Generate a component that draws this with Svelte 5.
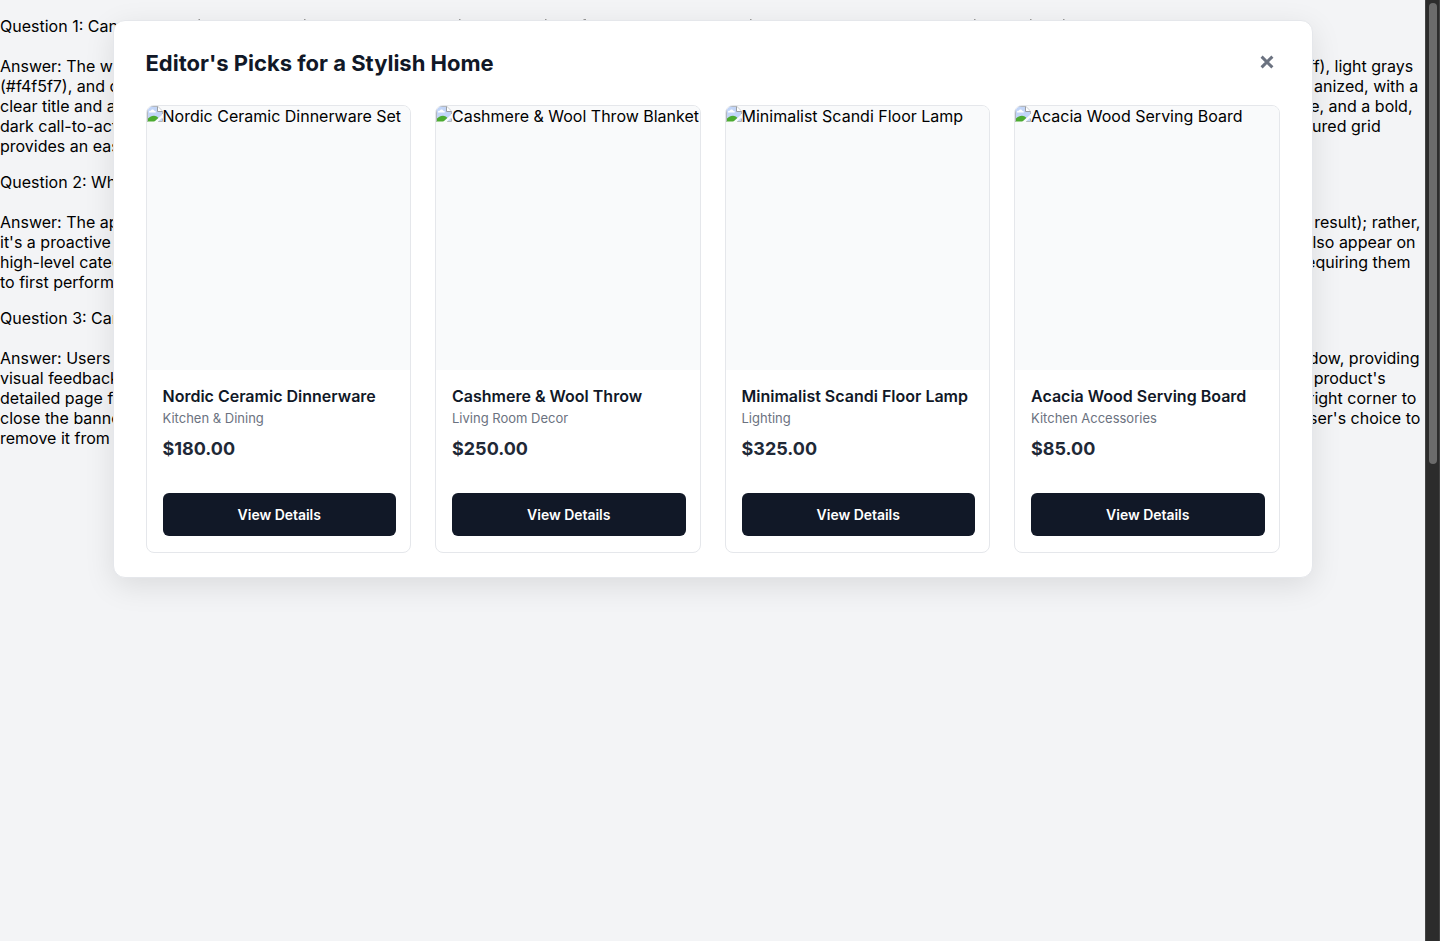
<script>
  const rows = [
    { left: 'Question 1: Can' },
    { left: '' },
    { left: 'Answer: The w', right: 'ff), light grays', end: 1413.3 },
    { left: '(#f4f5f7), and c', right: 'anized, with a', end: 1418.3 },
    { left: 'clear title and a', right: 'e, and a bold,', end: 1412.5 },
    { left: 'dark call-to-act', right: 'ured grid', end: 1380.7 },
    { left: 'provides an eas', last: true },
    { left: 'Question 2: Wh' },
    { left: '' },
    { left: 'Answer: The ap', right: 'result); rather,', end: 1420.3 },
    { left: "it's a proactive", right: 'lso appear on', end: 1415.5 },
    { left: 'high-level categ', right: 'equiring them', end: 1410.5 },
    { left: 'to first perform', last: true },
    { left: 'Question 3: Can' },
    { left: '' },
    { left: 'Answer: Users', right: 'dow, providing', end: 1419.5 },
    { left: 'visual feedback', right: "product's", end: 1385.7 },
    { left: 'detailed page f', right: 'right corner to', end: 1416.3 },
    { left: 'close the banne', right: "ser's choice to", end: 1420.3 },
    { left: 'remove it from' }
  ];

  const products = [
    { alt: 'Nordic Ceramic Dinnerware Set', name: 'Nordic Ceramic Dinnerware', category: 'Kitchen & Dining', price: '$180.00' },
    { alt: 'Cashmere & Wool Throw Blanket', name: 'Cashmere & Wool Throw', category: 'Living Room Decor', price: '$250.00' },
    { alt: 'Minimalist Scandi Floor Lamp', name: 'Minimalist Scandi Floor Lamp', category: 'Lighting', price: '$325.00' },
    { alt: 'Acacia Wood Serving Board', name: 'Acacia Wood Serving Board', category: 'Kitchen Accessories', price: '$85.00' }
  ];

  const tips = [198.5, 304, 459, 545, 583.5, 584.5, 750, 974, 1030, 1063];
</script>

<div class="page">
  <main class="content">
    <div class="copy">
      {#each rows as row}
        <div class="line" class:last={row.last} style:width={row.end ? `${row.end}px` : null}>
          <span>{row.left}</span>
          {#if row.right}<span>{row.right}</span>{/if}
        </div>
      {/each}
      <svg class="tips" width="1425" height="2" aria-hidden="true">
        {#each tips as x}<rect {x} y="0" width="1.5" height="1" />{/each}
      </svg>
    </div>

    <section class="banner">
      <header>
        <h2>Editor's Picks for a Stylish Home</h2>
        <button class="close" aria-label="Close">
          <svg width="14" height="14" viewBox="0 0 14 14"><path d="M1.6 1.6 12.4 12.4M12.4 1.6 1.6 12.4" /></svg>
        </button>
      </header>
      <div class="grid">
        {#each products as product}
          <article>
            <div class="picture">
              <svg width="16" height="16" viewBox="0 0 16 16">
                <path d="M0 0h10.5v5H15v10H0z" fill="#c2d5f7" />
                <path d="M2 6.5c-.3-1.400.8-2 1.800-1.700C4.500 3 6.700 3.200 7.200 4.700c1.200-.1 1.800.7 1.600 1.800z" fill="#fff" />
                <path d="M0 15.5v-2C2 11 4.500 9.700 7 9.700c1.500 0 3 .8 4.500 2.300L8 15.500z" fill="#4cab30" />
                <path d="M.5 15.500V.500h10.300L15.500 5.200V8M15.500 12.500v3H11" fill="none" stroke="#b4b8bd" />
                <path d="M10.500 .500v5h5" fill="#fff" stroke="#999da2" />
                <path d="M7 16 16 8v3L10.500 16z" fill="#f9fafb" />
              </svg><span>{product.alt}</span>
            </div>
            <div class="info">
              <h3>{product.name}</h3>
              <p class="category">{product.category}</p>
              <p class="price">{product.price}</p>
              <button class="details">View Details</button>
            </div>
          </article>
        {/each}
      </div>
    </section>
  </main>
  <div class="scrollbar"><div class="thumb"></div></div>
</div>

<style>
  :global(body) { margin: 0; overflow: hidden; }
  .page {
    display: flex;
    height: 941px;
    background: #f3f4f6;
    font-family: Inter, sans-serif;
    font-size: 16px;
    line-height: 20px;
    color: #000;
  }
  .content { position: relative; width: 1425px; flex: none; overflow: hidden; }
  .copy { padding-top: 16px; position: relative; }
  .line { display: flex; justify-content: space-between; height: 20px; white-space: pre; }
  .last { margin-bottom: 16px; }
  .tips { position: absolute; left: 0; top: 19px; fill: #999; }
  .banner {
    position: absolute;
    top: 20px;
    left: 112.5px;
    width: 1200px;
    height: 558px;
    box-sizing: border-box;
    padding: 24px 32px;
    background: #fff;
    border: 1px solid #e5e7eb;
    border-radius: 12px;
    box-shadow: 0 8px 30px rgba(0, 0, 0, 0.1);
  }
  header { display: flex; justify-content: space-between; align-items: center; height: 36px; margin-bottom: 24px; }
  h2 { margin: 0; font-size: 22px; line-height: 28px; font-weight: 700; color: #111827; }
  button { font-family: inherit; border: 0; margin: 0; }
  .close { display: flex; padding: 0; margin: 0 5.5px 3px 0; background: none; }
  .close path { stroke: #6b7280; stroke-width: 3; }
  .grid { display: grid; grid-template-columns: repeat(4, 1fr); gap: 24px; }
  article {
    height: 448px;
    box-sizing: border-box;
    border: 1px solid #e5e7eb;
    border-radius: 8px;
    overflow: hidden;
    display: flex;
    flex-direction: column;
  }
  .picture { height: 264px; flex: none; display: flex; align-items: flex-start; background: #f9fafb; white-space: nowrap; }
  .picture svg { flex: none; }
  .picture span { line-height: 20px; }
  .info { flex: 1; padding: 16px 14px 16px 16px; display: flex; flex-direction: column; }
  h3 { margin: 0; font-size: 16px; font-weight: 600; line-height: 21px; color: #111827; white-space: nowrap; }
  .category { margin: 3px 0 0; font-size: 13px; line-height: 16px; color: #6b7280; }
  .price { margin: 12px 0 0; font-size: 18px; line-height: 22px; font-weight: 700; color: #1f2937; }
  .details { margin-top: auto; height: 43px; border-radius: 6px; background: #111827; color: #fff; font-size: 14px; font-weight: 600; letter-spacing: -0.03px; }
  .scrollbar { width: 15px; box-sizing: border-box; padding: 3px 3px 0 4px; background: #2c2c2c; box-shadow: inset 1px 0 #444, inset -1px 0 #444; }
  .thumb { width: 8px; height: 461px; border-radius: 4px; background: #6b6b6b; }
</style>
